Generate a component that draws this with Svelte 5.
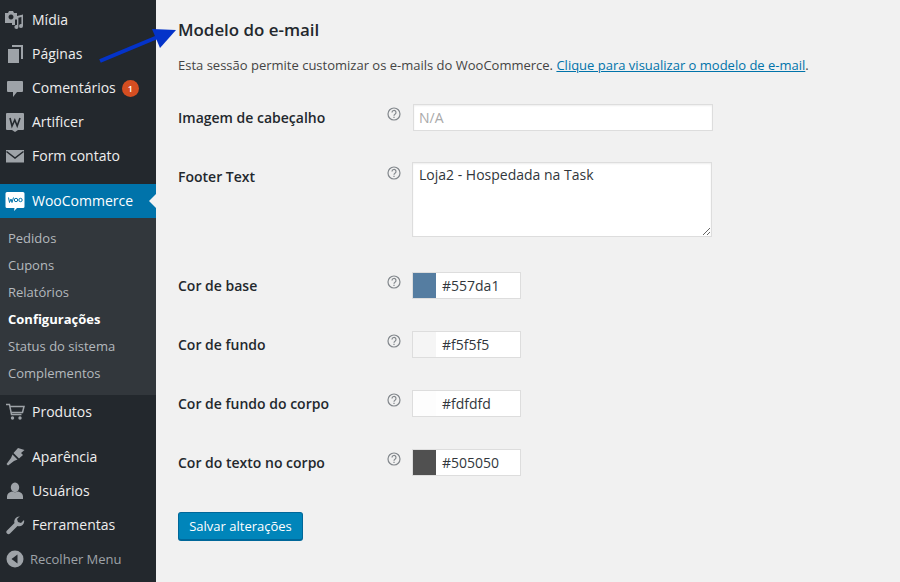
<script>
  const topMenu = [
    { label: 'Mídia', icon: 'media' },
    { label: 'Páginas', icon: 'pages' },
    { label: 'Comentários', icon: 'comments', badge: 1 },
    { label: 'Artificer', icon: 'artificer' },
    { label: 'Form contato', icon: 'mail' }
  ];
  const submenu = ['Pedidos', 'Cupons', 'Relatórios', 'Configurações', 'Status do sistema', 'Complementos'];
  const bottomMenu = [
    { label: 'Aparência', icon: 'brush' },
    { label: 'Usuários', icon: 'user' },
    { label: 'Ferramentas', icon: 'wrench' }
  ];
  const colors = [
    { label: 'Cor de base', value: '#557da1' },
    { label: 'Cor de fundo', value: '#f5f5f5' },
    { label: 'Cor de fundo do corpo', value: '#fdfdfd' },
    { label: 'Cor do texto no corpo', value: '#505050' }
  ];
</script>

{#snippet icon(name)}
  <svg class="ico" viewBox="0 0 20 20" fill="#9ea3a8">
    {#if name === 'media'}
      <path d="M0 3h3l1-2h4l1 2h3v6.500H10V15H7v-2H0z M6 4.500a2.500 2.500 0 1 0 .01 0z" fill-rule="evenodd"/>
      <path d="M12 6l6-1.500V16a2 2 0 1 1-1.600-1.900V7l-3 .8V17a2 2 0 1 1-1.400-1.900z"/>
    {:else if name === 'pages'}
      <path d="M7 1h11v14h-2V3H7z"/>
      <path d="M3 5h11v14H3z"/>
    {:else if name === 'comments'}
      <path d="M3 3h14a1 1 0 0 1 1 1v9a1 1 0 0 1-1 1h-5l-4 5v-5H3a1 1 0 0 1-1-1V4a1 1 0 0 1 1-1z"/>
    {:else if name === 'artificer'}
      <path d="M2 1h16a1 1 0 0 1 1 1v15a1 1 0 0 1-1 1h-5l-3 2-3-2H2a1 1 0 0 1-1-1V2a1 1 0 0 1 1-1z"/>
      <path d="M5 6l2 8 2.800-6 2.400 6L15 6" fill="none" stroke="#23282d" stroke-width="1.600"/>
    {:else if name === 'mail'}
      <path d="M1 4h18v12.500H1z"/>
      <path d="M1.500 5.500L10 12l8.500-6.500" fill="none" stroke="#23282d" stroke-width="1.500"/>
    {:else if name === 'woo'}
      <path d="M2 1h16a1.500 1.500 0 0 1 1.500 1.500v13a1.500 1.500 0 0 1-1.500 1.500h-6l-3 3 .5-3H2A1.500 1.500 0 0 1 .5 15.500v-13A1.500 1.500 0 0 1 2 1z" fill="#fff"/>
      <path d="M3.500 6.500l1 5 1.500-3.500 1 3.500 1.500-5" fill="none" stroke="#0073aa" stroke-width="1"/>
      <circle cx="11" cy="9" r="1.700" fill="none" stroke="#0073aa" stroke-width="1"/>
      <circle cx="15.500" cy="9" r="1.700" fill="none" stroke="#0073aa" stroke-width="1"/>
    {:else if name === 'cart'}
      <path d="M1 2.500h3.500l2 10h10" fill="none" stroke="#9ea3a8" stroke-width="1.500"/>
      <path d="M5 4.500h14l-1.500 6H6.200" fill="none" stroke="#9ea3a8" stroke-width="1.500"/>
      <circle cx="7.500" cy="16" r="1.700"/>
      <circle cx="15" cy="16" r="1.700"/>
    {:else if name === 'brush'}
      <path d="M19.500 3L13 1 8.500 6l5.500 5.500 4-3.500-2-2z"/>
      <path d="M7.500 7.500L6 11l-4.500 6 1.500 1.500 6-4.500 3.500-1.500z"/>
    {:else if name === 'user'}
      <path d="M10 1.500a4.200 4.800 0 1 1-.01 0z"/>
      <path d="M7 10.500c2 1 4 1 6 0 3 .5 5 2.500 5 5v2.500H2v-2.500c0-2.500 2-4.500 5-5z"/>
    {:else if name === 'wrench'}
      <path d="M14.500 1.500a5 5 0 0 0-5 6.500L2 15.500a2.100 2.100 0 0 0 3 3L12.500 11a5 5 0 0 0 6.500-6l-3 3-3-1-1-3 3-3a5 5 0 0 0-.5 0z"/>
    {/if}
  </svg>
{/snippet}

{#snippet help()}
  <svg class="help" viewBox="0 0 14 14" fill="none" stroke="#82878c">
    <circle cx="7" cy="7" r="6" stroke-width="1.200"/>
    <path d="M5 5.500a2 2 0 1 1 3 1.700c-.7.4-1 .7-1 1.500" stroke-width="1.200"/>
    <path d="M7 9.800v1.200" stroke-width="1.200"/>
  </svg>
{/snippet}

<div class="page">
  <aside class="side">
    <ul class="menu first">
      {#each topMenu as m}
        <li>
          {@render icon(m.icon)}
          <span>{m.label}</span>
          {#if m.badge}<b class="badge">{m.badge}</b>{/if}
        </li>
      {/each}
    </ul>
    <div class="current">
      {@render icon('woo')}
      <span>WooCommerce</span>
    </div>
    <ul class="sub">
      {#each submenu as s}
        <li class:on={s === 'Configurações'}>{s}</li>
      {/each}
    </ul>
    <ul class="menu">
      <li>{@render icon('cart')}<span>Produtos</span></li>
    </ul>
    <ul class="menu lower">
      {#each bottomMenu as m}
        <li>{@render icon(m.icon)}<span>{m.label}</span></li>
      {/each}
    </ul>
    <div class="collapse">
      <svg class="ico" viewBox="0 0 20 20">
        <circle cx="10" cy="10" r="8.500" fill="#9ea3a8"/>
        <path d="M12.500 5.500v9L6.500 10z" fill="#23282d"/>
      </svg>
      <span>Recolher Menu</span>
    </div>
  </aside>

  <main class="main">
    <h2>Modelo do e-mail</h2>
    <p class="intro">Esta sessão permite customizar os e-mails do WooCommerce. <a href="#preview">Clique para visualizar o modelo de e-mail</a>.</p>

    <div class="row first-row">
      <div class="lbl">Imagem de cabeçalho</div>
      {@render help()}
      <input class="text" placeholder="N/A" />
    </div>

    <div class="row area-row">
      <div class="lbl">Footer Text</div>
      {@render help()}
      <textarea>Loja2 - Hospedada na Task</textarea>
    </div>

    {#each colors as c}
      <div class="row color-row">
        <div class="lbl">{c.label}</div>
        {@render help()}
        <div class="color">
          <span class="swatch" style="background:{c.value}"></span>
          <span class="hex">{c.value}</span>
        </div>
      </div>
    {/each}

    <button class="save">Salvar alterações</button>
  </main>

  <!-- annotation drawn over the screenshot -->
  <svg class="arrow" viewBox="0 0 90 50" width="90" height="50">
    <path d="M10 43L70 18" stroke="#0433c9" stroke-width="4" fill="none"/>
    <path d="M86 12L62 11l8 19z" fill="#0433c9"/>
  </svg>
</div>

<style>
  :global(body) { margin: 0; background: #f1f1f1; font-family: "Open Sans", sans-serif; }
  .page { display: flex; width: 900px; height: 582px; overflow: hidden; position: relative; color: #23282d; }
  .side { width: 156px; flex: none; background: #23282d; color: #eee; font-size: 14px; }
  ul { list-style: none; margin: 0; padding: 0; }
  .menu li, .current { display: flex; align-items: center; height: 34px; }
  .menu li span, .current span { padding-bottom: 2px; }
  .menu.first { margin-top: 3px; margin-bottom: 11px; }
  .menu.lower { margin-top: 11px; }
  .ico { width: 20px; height: 20px; margin: 0 7px 0 5px; flex: none; }
  .badge { width: 17px; height: 17px; border-radius: 50%; background: #d54e21; color: #fff; font-size: 9px; font-weight: 600; margin-left: 6px; display: flex; align-items: center; justify-content: center; }
  .current { background: #0073aa; color: #fff; position: relative; }
  .current::after { content: ""; position: absolute; right: 0; top: 10px; border: 7px solid transparent; border-right-color: #f1f1f1; border-left: 0; }
  .sub { background: #32373c; padding: 7px 0 8px; font-size: 13px; color: #b4b9be; }
  .sub li { height: 27px; line-height: 27px; padding-left: 8px; }
  .sub li.on { color: #fff; font-weight: 700; }
  .collapse { display: flex; align-items: center; height: 34px; color: #9ea3a8; font-size: 13px; }
  .collapse .ico { margin-right: 5px; }

  .main { flex: 1; padding: 0 22px; font-size: 14px; }
  h2 { font-size: 16.9px; font-weight: 600; line-height: 20px; margin: 20px 0 0; }
  .intro { font-size: 13px; line-height: 20px; margin: 15px 0 0; color: #444; }
  .intro a { color: #0073aa; }
  .row { display: flex; align-items: flex-start; }
  .first-row { margin-top: 29px; margin-bottom: 31px; }
  .area-row { margin-bottom: 35px; }
  .color-row { margin-bottom: 32px; }
  .lbl { width: 209px; flex: none; font-weight: 600; font-size: 14px; line-height: 27px; }
  .area-row .lbl { line-height: 29px; }
  .help { width: 14px; height: 14px; margin-top: 3px; margin-right: 12px; flex: none; }
  .area-row .help { margin-top: 4px; }
  .text { width: 300px; height: 27px; box-sizing: border-box; border: 1px solid #ddd; background: #fff; padding: 0 5px; margin: 0; font: 14px "Open Sans", sans-serif; box-shadow: inset 0 1px 2px rgba(0,0,0,.07); outline: 0; }
  .text::placeholder { color: #a9a9a9; opacity: 1; }
  textarea { width: 300px; height: 75px; box-sizing: border-box; border: 1px solid #ddd; background: #fff; padding: 2px 6px; margin: 0 0 0 -1px; font: 14px/20px "Open Sans", sans-serif; color: #32373c; box-shadow: inset 0 1px 2px rgba(0,0,0,.07); outline: 0; display: block; }
  .color { display: flex; width: 109px; height: 27px; box-sizing: border-box; border: 1px solid #ddd; background: #fff; margin-left: -1px; }
  .swatch { width: 23px; flex: none; }
  .hex { padding-left: 6px; line-height: 25px; font-size: 14px; color: #32373c; }
  .save { display: block; margin-top: 36px; width: 125px; height: 29px; box-sizing: border-box; padding: 0; background: #0085ba; border: 1px solid #006799; border-bottom-width: 2px; border-radius: 3px; color: #fff; font: 13px "Open Sans", sans-serif; }
  .arrow { position: absolute; left: 90px; top: 18px; }
</style>
